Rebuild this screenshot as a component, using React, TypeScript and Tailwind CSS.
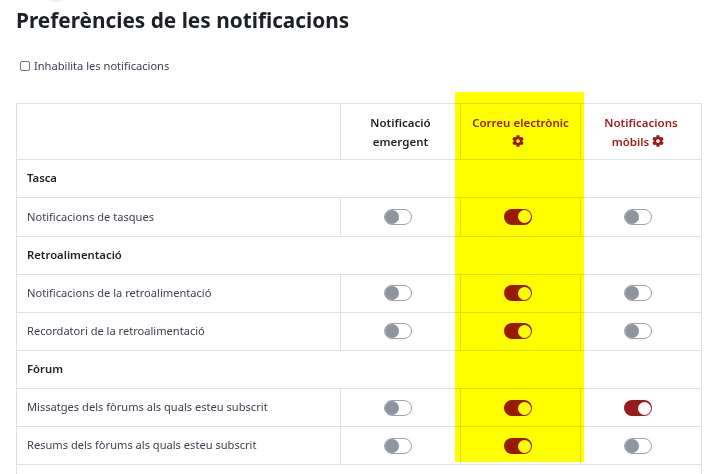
import { FaCog } from 'react-icons/fa';

const font = { fontFamily: '"Noto Sans", sans-serif' };

type Row =
  | { type: 'section'; label: string; h: string }
  | { type: 'item'; label: string; h: string; on: boolean[]; pad: string };

const rows: Row[] = [
  { type: 'section', label: 'Tasca', h: 'h-[38px]' },
  { type: 'item', label: 'Notificacions de tasques', h: 'h-[39px]', on: [false, true, false], pad: 'pb-[2px]' },
  { type: 'section', label: 'Retroalimentació', h: 'h-[38px]' },
  { type: 'item', label: 'Notificacions de la retroalimentació', h: 'h-[38px]', on: [false, true, false], pad: 'pb-[2px]' },
  { type: 'item', label: 'Recordatori de la retroalimentació', h: 'h-[38px]', on: [false, true, false], pad: 'pb-[2px]' },
  { type: 'section', label: 'Fòrum', h: 'h-[38px]' },
  { type: 'item', label: 'Missatges dels fòrums als quals esteu subscrit', h: 'h-[38px]', on: [false, true, true], pad: 'pb-0' },
  { type: 'item', label: 'Resums dels fòrums als quals esteu subscrit', h: 'h-[38px]', on: [false, true, false], pad: 'pb-0' },
];

function Gear() {
  return <FaCog className="inline-block w-[12px] h-[12px] align-[-1px] mr-[6px] text-[#981b1e]" aria-hidden="true" />;
}

function Toggle({ on }: { on: boolean }) {
  if (on) {
    return (
      <span className="inline-flex items-center justify-end w-[28px] h-[16px] rounded-full bg-[#981b1e] pr-[1px] align-middle">
        <span className="w-[13px] h-[13px] rounded-full bg-white" />
      </span>
    );
  }
  return (
    <span className="inline-flex items-center justify-start w-[28px] h-[16px] rounded-full bg-white border border-[#9ca3af] align-middle">
      <span className="w-[14px] h-[14px] rounded-full bg-[#8f959e]" />
    </span>
  );
}

export default function App() {
  return (
    <div className="relative w-[713px] h-[474px] overflow-hidden bg-white text-[#1d2125]" style={font}>
      <div className="absolute left-[38px] top-[-34px] w-[36px] h-[36px] rounded-full bg-[#eef0f2]" />
      <h2 className="pl-[16px] pt-[5px] h-[58px] text-[20.8px] leading-[30px] font-bold">Preferències de les notificacions</h2>
      <label className="flex items-center pl-[20px] h-[16px] text-[11.1px] leading-[16px] text-[#3a424e]">
        <span className="w-[10px] h-[10px] mr-[4px] rounded-[2px] border border-[#767676] bg-white" />
        Inhabilita les notificacions
      </label>
      <div className="pl-[16px] pt-[29px]">
        <table className="w-[686px] table-fixed border-collapse border-x border-[#dee2e6] text-[11.1px]">
          <thead>
            <tr className="h-[56px] border-y border-[#dee2e6] text-[11.5px] leading-[19px] text-center">
              <th className="w-[324px] border-r border-[#dee2e6]" />
              <th className="w-[120px] px-[16px] border-r border-[#dee2e6] font-semibold">Notificació emergent</th>
              <th className="w-[120px] px-[8px] border-r border-[#dee2e6] font-semibold text-[#981b1e]">
                Correu electrònic <Gear />
              </th>
              <th className="px-[8px] font-semibold text-[#981b1e]">
                Notificacions mòbils <Gear />
              </th>
            </tr>
          </thead>
          <tbody>
            {rows.map((row) =>
              row.type === 'section' ? (
                <tr key={row.label} className={`${row.h} border-b border-[#dee2e6]`}>
                  <td colSpan={4} className="pl-[10px] text-[11.3px] font-semibold">{row.label}</td>
                </tr>
              ) : (
                <tr key={row.label} className={`${row.h} border-b border-[#dee2e6]`}>
                  <td className="pl-[10px] border-r border-[#dee2e6] text-[#3a424e]">{row.label}</td>
                  {row.on.map((on, i) => (
                    <td key={i} className={`text-center pr-[6px] ${row.pad} ${i < 2 ? 'border-r border-[#dee2e6]' : ''}`}>
                      <Toggle on={on} />
                    </td>
                  ))}
                </tr>
              ),
            )}
            <tr className="h-[12px]">
              <td colSpan={4} />
            </tr>
          </tbody>
        </table>
      </div>
      {/* highlight drawn on top of the email column */}
      <div className="absolute left-[455px] top-[92px] w-[129px] h-[370px] bg-[#ffff00] mix-blend-multiply" />
    </div>
  );
}
